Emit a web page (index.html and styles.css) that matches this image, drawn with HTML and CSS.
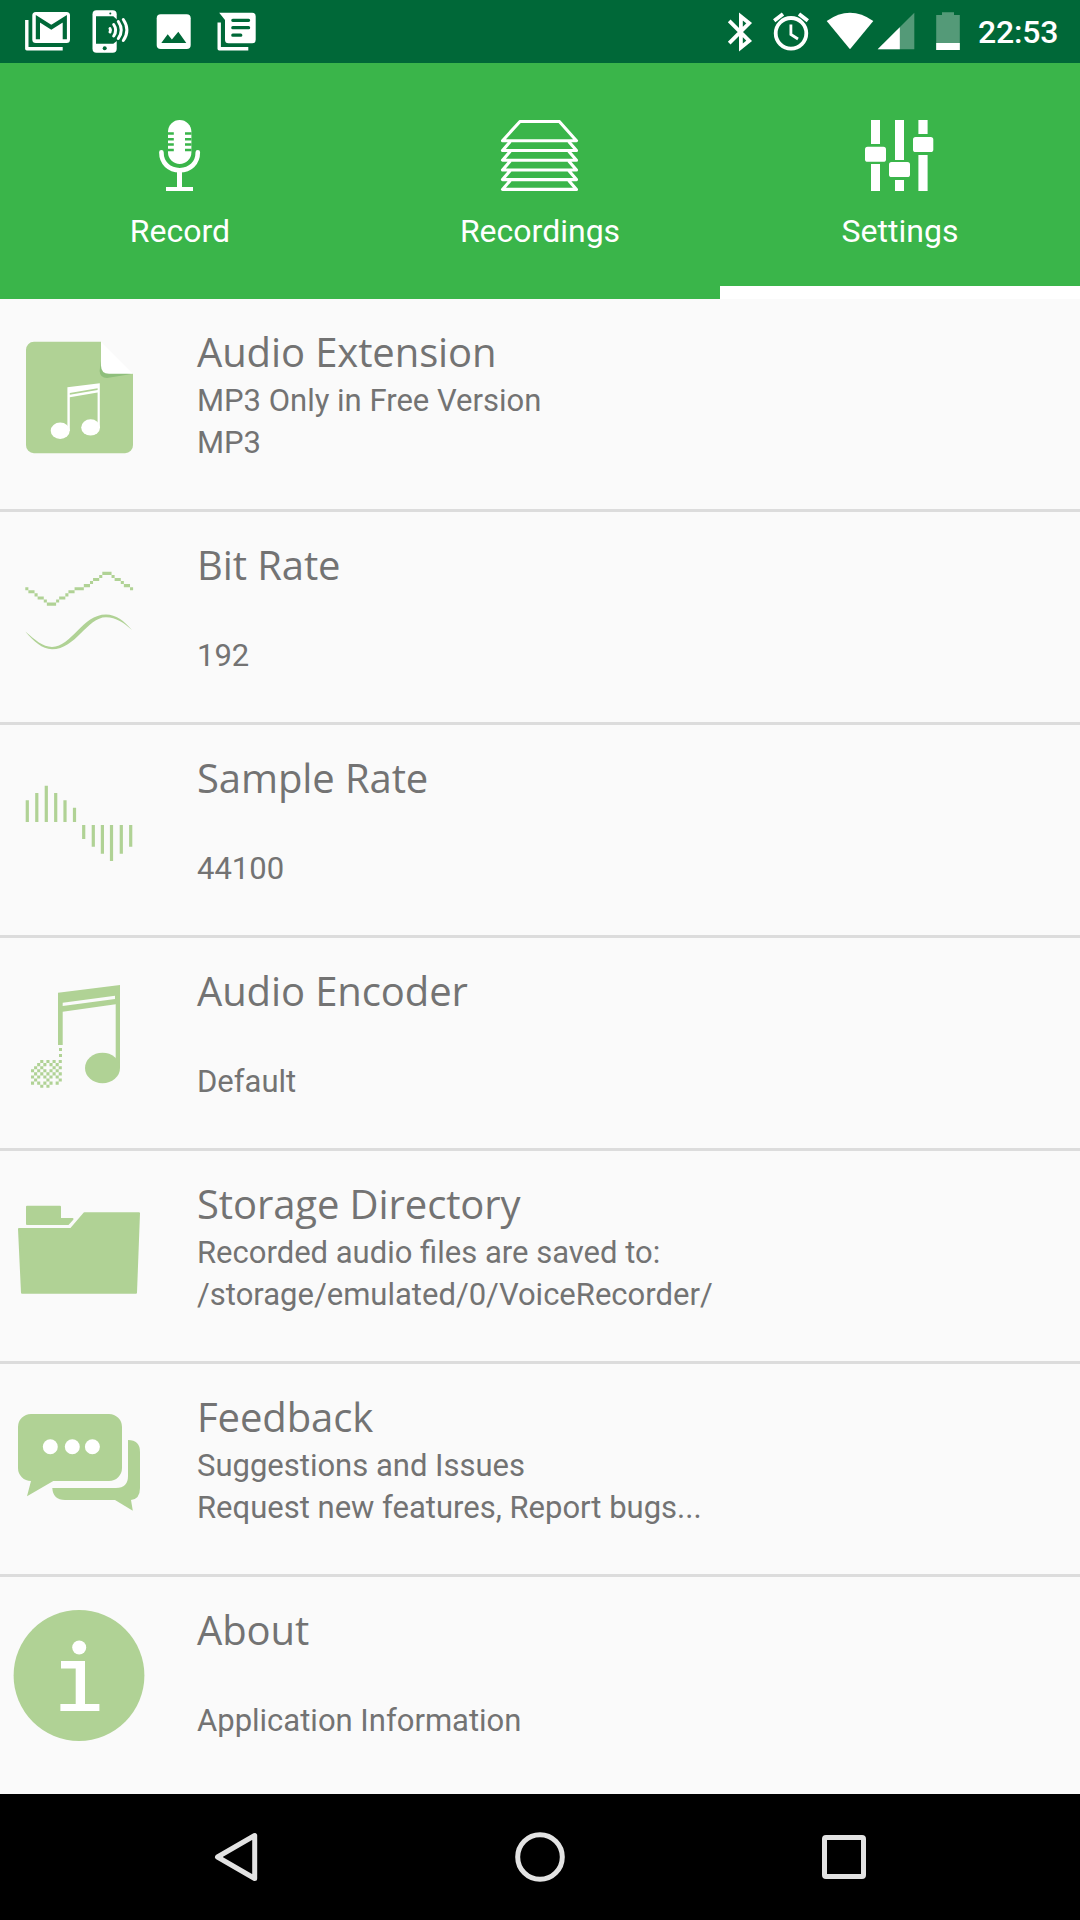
FILE: index.html
```html
<!DOCTYPE html>
<html lang="en">
<head>
<meta charset="utf-8">
<title>Voice Recorder</title>
<link rel="stylesheet" href="styles.css">
</head>
<body>
<div class="screen">
  <header class="status">
    <div class="status-left">
      <svg width="55" height="63" viewBox="0 0 55 63"><rect x="12.3" y="12" width="37.7" height="31" rx="3.5" fill="#fff"/><path d="M17.9 39.3V18.8L31.3 27.2 44.8 18.8V39.3" fill="none" stroke="#006838" stroke-width="4.2"/><path d="M6.8 20V48.7H42.7" fill="none" stroke="#fff" stroke-width="3.4" stroke-linejoin="round"/></svg>
      <svg width="55" height="63" viewBox="0 0 55 63"><rect x="9.5" y="10.3" width="24.2" height="42.4" rx="4" fill="#fff"/><path d="M13 16.3H30.3L34.5 20V40.5L30.3 43.7H13z" fill="#006838"/><circle cx="21.7" cy="48.2" r="2" fill="#006838"/><circle cx="27.3" cy="13.6" r="1" fill="#006838"/><g fill="none" stroke="#fff" stroke-width="3" stroke-linecap="round"><path d="M27 28.5Q28 30 27 32"/><path d="M30.7 24.5Q34.6 30.2 30.7 36"/><path d="M35.3 21.5Q41.2 30.2 35.3 38.5"/><path d="M40.3 19.5Q47.5 30.2 40.3 40.5"/></g></svg>
      <svg width="55" height="63" viewBox="0 0 55 63"><rect x="10.7" y="14.3" width="34" height="34.6" rx="4" fill="#fff"/><path d="M15.3 43L21.7 34.3 25.9 39.5 32.3 31.7 40.3 43z" fill="#006838"/></svg>
      <svg width="55" height="63" viewBox="0 0 55 63"><path d="M10.2 12.7H43.2a3.5 3.5 0 0 1 3.5 3.5V39.7a3.5 3.5 0 0 1-3.5 3.5H19.5a3.5 3.5 0 0 1-3.5-3.5V20z" fill="#fff"/><path d="M23.8 20.3H39.6M23.8 27.7H39.6M23.8 35.2H31.8" stroke="#006838" stroke-width="3.2" stroke-linecap="round"/><path d="M10.2 22.5V48.7H39.3" fill="none" stroke="#fff" stroke-width="3.4" stroke-linejoin="round"/></svg>
    </div>
    <div class="status-right">
      <svg class="bluetooth" width="26" height="63" viewBox="0 0 26 63"><path d="M2.2 20.8L22.2 40.8 13.9 47.5V16.5L22.2 23.2 2.2 43.2" fill="none" stroke="#fff" stroke-width="3.8"/></svg>
      <svg class="alarm" width="38" height="63" viewBox="0 0 38 63"><circle cx="19" cy="33.3" r="15.3" fill="none" stroke="#fff" stroke-width="3.8"/><path d="M2.2 20.8L11 14M27 14L35.8 20.8" stroke="#fff" stroke-width="3.8"/><path d="M18.9 24.5V34.5L26 39" fill="none" stroke="#fff" stroke-width="2.8"/></svg>
      <svg class="wifi" width="48" height="63" viewBox="0 0 48 63"><path d="M.7 21Q24 4.5 47.3 21L24 49.3z" fill="#fff"/></svg>
      <svg class="signal" width="38" height="63" viewBox="0 0 38 63"><path d="M37.3 12.7V49.3H.7z" fill="#549a78"/><path d="M22.8 27.2V49.3H.7z" fill="#fff"/></svg>
      <svg class="battery" width="24" height="63" viewBox="0 0 24 63"><path d="M6 12.3H18V15H23.8V50H.2V15H6z" fill="#549a78"/><path d="M.2 43H23.8V50H.2z" fill="#fff"/></svg>
      <span class="clock">22:53</span>
    </div>
  </header>

  <nav class="tabs">
    <div class="tab">
      <svg width="80" height="71" viewBox="0 0 80 71"><rect x="28" y="0" width="23.4" height="44" rx="11.7" fill="#fff"/><path d="M28 13.5H33.8M45 13.5H51.5M28 19.2H33.8M45 19.2H51.5M28 24.5H33.8M45 24.5H51.5M28 30H33.8M45 30H51.5" stroke="#3ab54a" stroke-width="2.5"/><path d="M21.4 32.2C21.4 43 29 50.2 39.7 50.2S57.8 43 57.8 32.2" fill="none" stroke="#fff" stroke-width="4.6" stroke-linecap="round"/><path d="M37 50H42V67H53V71H26V67H37z" fill="#fff"/></svg>
      <span>Record</span>
    </div>
    <div class="tab">
      <svg width="80" height="71" viewBox="0 0 80 71"><g fill="none" stroke="#fff" stroke-width="3.1" stroke-linejoin="round"><path d="M20 1.5H59.3L76.5 20.7H2.5z"/><path d="M10.3 21.5L2.5 30.5H76.5L68.7 21.5M10.3 31.2L2.5 40.2H76.5L68.7 31.2M10.3 41L2.5 50H76.5L68.7 41M10.3 50.6L2.5 59.6H76.5L68.7 50.6M10.3 60.4L2.5 69.4H76.5L68.7 60.4"/></g></svg>
      <span>Recordings</span>
    </div>
    <div class="tab active">
      <svg width="80" height="71" viewBox="0 0 80 71"><g fill="#fff"><path d="M11 0H20V24H11zM11 44H20V71H11zM35 0H44V40H35zM35 60H44V71H35zM58.4 0H67.6V14H58.4zM58.4 35H67.6V71H58.4z"/><rect x="5" y="26.8" width="21" height="15" rx="2.6"/><rect x="29" y="42" width="21" height="15" rx="2.6"/><rect x="53" y="17" width="20.3" height="15" rx="2.6"/></g></svg>
      <span>Settings</span>
    </div>
  </nav>

  <main class="list">
    <section class="row">
      <svg class="icon" viewBox="0 0 197 210"><path d="M34 42.7H101V74.7H133V146a8 8 0 0 1-8 8.3H34a8 8 0 0 1-8-8.3V51a8 8 0 0 1 8-8.3z"/><path d="M101 62L99.6 72Q100 79 107 79L133 74.7 110 72z" fill="#8fbf7c"/><path d="M101 42.7L133 74.7H109Q101 74.7 101 66.5z" fill="#fff"/><g fill="#fff"><path fill-rule="evenodd" d="M67.4 88.3L99.8 84.3V129H97.6V93.5L69.8 98.3V132H67.4zM69.8 94V95.8L97.6 91V89.2z"/><ellipse cx="60.2" cy="131.7" rx="9.5" ry="8.2"/><ellipse cx="90.6" cy="128.4" rx="9.4" ry="8.1"/></g></svg>
      <div class="text"><h2>Audio Extension</h2><p>MP3 Only in Free Version</p><p>MP3</p></div>
    </section>
    <section class="row">
      <svg class="icon" viewBox="0 0 197 210"><g transform="translate(25.3 59.8) scale(3.08)"><path fill="none" stroke="#b0d295" d="M0 5.5h1M1 6.5h2M3 7.5h1M4 8.5h2M6 9.5h1M7 10.5h3M10 9.5h1M11 8.5h2M13 7.5h1M14 6.5h2M16 5.5h3M19 4.5h2M21 3.5h1M22 2.5h2M24 1.5h1M25 .5h3M28 1.5h1M29 2.5h2M31 3.5h1M32 4.5h2M34 5.5h1"/></g><path d="M25.3 119.5C35 128 43 134.9 52 134.9 72 134.9 82 102.6 106 102.6 116 102.6 124 109 132 118 124 110.8 116 105.2 106 105.2 87 105.2 76 137.2 52 137.2 42 137.2 34 129.5 25.3 119.5z"/></svg>
      <div class="text"><h2>Bit Rate</h2><p></p><p>192</p></div>
    </section>
    <section class="row">
      <svg class="icon" viewBox="0 0 197 210"><path fill="none" stroke="#b0d295" stroke-width="3.2" d="M27.3 75.3V97M36.8 68V97M46.3 60.7V97M55.7 68V97M65 75.3V97M74.5 82.7V97M83.7 100V114M93.3 100V121.7M102.4 100V128.7M111.5 100V136M121.3 100V128.7M130.7 100V121.7"/></svg>
      <div class="text"><h2>Sample Rate</h2><p></p><p>44100</p></div>
    </section>
    <section class="row">
      <svg class="icon" viewBox="0 0 197 210"><path fill-rule="evenodd" d="M58 54.7L120 47V130H115.7V66.3L62.7 73.7V107H58zM62.7 64.7V68L115 61V57.7z"/><ellipse cx="102.5" cy="130" rx="17.5" ry="15.3"/><path d="M59 110h3v3h-3zM59 116h3v3h-3z"/><g transform="translate(31 122) scale(3.08)"><path fill="none" stroke="#b0d295" stroke-dasharray="1 1" d="M3 .5H10M2 1.5H10M1 2.5H5M7 2.5H10M0 3.5H10M1 4.5H10M0 5.5H10M1 6.5H3M5 6.5H6M9 6.5H10M0 7.5H10M3 8.5H7"/></g></svg>
      <div class="text"><h2>Audio Encoder</h2><p></p><p>Default</p></div>
    </section>
    <section class="row">
      <svg class="icon" viewBox="0 0 197 210"><g stroke="#b0d295" stroke-width="2" stroke-linejoin="round"><path d="M27 55.7H60V68H72.5L68 73H27z"/><path d="M19 78H71L84.5 62.2H139L136 141.8H22z"/></g></svg>
      <div class="text"><h2>Storage Directory</h2><p>Recorded audio files are saved to:</p><p>/storage/emulated/0/VoiceRecorder/</p></div>
    </section>
    <section class="row">
      <svg class="icon" viewBox="0 0 197 210"><path d="M31 50H109a13 13 0 0 1 13 13V104a13 13 0 0 1-13 13H53.3L27 132.3 31 117a13 13 0 0 1-13-13V63a13 13 0 0 1 13-13z"/><path d="M128 76Q140 76 140 88V124Q140 135 131 136L132.8 146.8 115 136H65Q53 136 52.3 124H116Q128 124 128 112z"/><g fill="#fff"><circle cx="50.3" cy="82.7" r="7.5"/><circle cx="72.3" cy="82.7" r="7.5"/><circle cx="92.4" cy="82.7" r="7.5"/></g></svg>
      <div class="text"><h2>Feedback</h2><p>Suggestions and Issues</p><p>Request new features, Report bugs...</p></div>
    </section>
    <section class="row">
      <svg class="icon" viewBox="0 0 197 210"><circle cx="79" cy="98.5" r="65.4"/><circle cx="79.2" cy="70.5" r="7" fill="#fff"/><path d="M61 84H85V127H99.4V134H60.4V127H75.7V91.5H61z" fill="#fff"/></svg>
      <div class="text"><h2>About</h2><p></p><p>Application Information</p></div>
    </section>
  </main>

  <footer class="navbar">
    <svg width="60" height="60" viewBox="0 0 60 60"><path d="M48.7 8.5V51.5L11.5 30z"/></svg>
    <svg width="60" height="60" viewBox="0 0 60 60"><circle cx="30" cy="30" r="22.3"/></svg>
    <svg width="60" height="60" viewBox="0 0 60 60"><rect x="10.5" y="10.5" width="39" height="39" rx="1.5"/></svg>
  </footer>
</div>
</body>
</html>
```
FILE: styles.css
```css
* { box-sizing: border-box; margin: 0; padding: 0; }
body { background: #fafafa; font-family: Roboto, "Liberation Sans", sans-serif; }
svg { display: block; flex: none; }
.screen { width: 1080px; height: 1920px; display: flex; flex-direction: column; overflow: hidden; }

.status { height: 63px; flex: none; background: #006838; color: #fff; display: flex; justify-content: space-between; }
.status-left { display: flex; gap: 8px; padding-left: 20px; }
.status-right { display: flex; padding-right: 22px; }
.alarm { margin-left: 19px; }
.wifi { margin-left: 16px; }
.signal { margin-left: 3px; }
.battery { margin-left: 21px; }
.clock { width: 80px; margin-left: 18px; font-size: 32px; font-weight: 500; line-height: 65px; letter-spacing: -0.2px; white-space: nowrap; }

.tabs { height: 236px; flex: none; background: #3ab54a; color: #fff; display: flex; }
.tab { flex: 1; display: flex; flex-direction: column; align-items: center; padding-top: 57px; border-bottom: 13px solid transparent; }
.tab.active { border-bottom-color: #fff; }
.tab span { margin-top: 20px; font-size: 32px; line-height: 40px; }

.list { flex: 1; color: #737373; }
.row { height: 213px; display: flex; border-bottom: 3px solid #dcdcdc; }
.row:last-child { border-bottom: 0; }
.icon { width: 197px; height: 210px; fill: #b0d295; }
.text { padding-top: 25px; white-space: nowrap; }
.text h2 { font: 400 40px/56px "Open Sans", "Noto Sans", sans-serif; letter-spacing: -0.1px; }
.text p { height: 42px; font-size: 31px; line-height: 42px; }

.navbar { height: 126px; flex: none; background: #000; display: flex; justify-content: space-between; align-items: center; padding: 0 206px; }
.navbar svg { fill: none; stroke: #e3e3e3; stroke-width: 5; stroke-linejoin: round; }
```
